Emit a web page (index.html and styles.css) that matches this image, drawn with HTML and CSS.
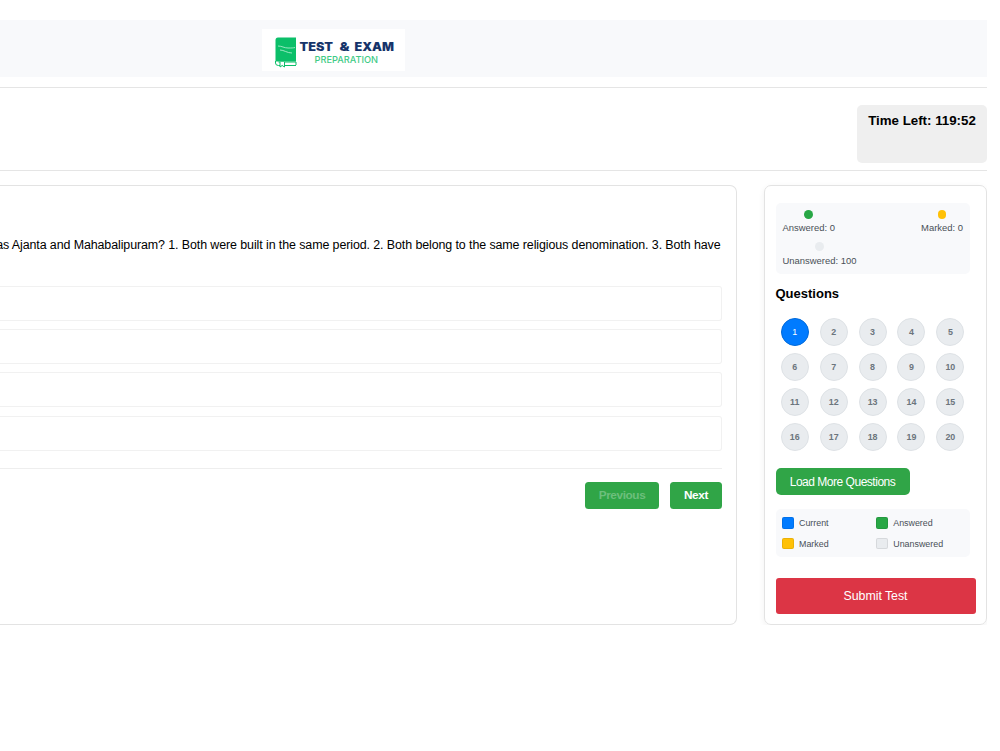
FILE: index.html
```html
<!DOCTYPE html>
<html lang="en">
  <head>
    <meta charset="UTF-8" />
    <meta name="viewport" content="width=device-width, initial-scale=1.0" />
    <title>Test & Exam Preparation</title>
    <link rel="stylesheet" href="styles.css">
  </head>
  <body>
    <header class="header">
      <svg class="logo" width="143" height="42" viewBox="0 0 143 42">
        <rect width="143" height="42" fill="#fff" />
        <path d="M16 8.500h18v24H13.500V11q0-2.500 2.500-2.500z" fill="#0bbf69" />
        <path d="M13.500 32v2q0 2.500 3 2.500h17.500M16.500 33h17.500v3" fill="none" stroke="#0bbf69" stroke-width="1" />
        <path d="M18 33v5l2.200-1.500 2.300 1.500v-5" fill="#fff" stroke="#0bbf69" stroke-width="1" />
        <path d="M16 17c4 0 6 2 10 2s5 0 7-.5M18 21c4 0 7 3 12 3" fill="none" stroke="#a5ebc8" stroke-width=".9" />
        <text class="logo-name" x="37.500" y="21.500" textLength="33.500" lengthAdjust="spacingAndGlyphs">TEST</text>
        <text class="logo-name" x="77.500" y="21.500" textLength="10" lengthAdjust="spacingAndGlyphs">&amp;</text>
        <text class="logo-name" x="92.500" y="21.500" textLength="39.500" lengthAdjust="spacingAndGlyphs">EXAM</text>
        <text class="logo-sub" x="52.500" y="33.800" textLength="63.500" lengthAdjust="spacingAndGlyphs">PREPARATION</text>
      </svg>
    </header>
    <div class="timer-bar">
      <div class="timer">Time Left: 119:52</div>
    </div>
    <div class="container">
      <main class="question-panel">
        <div class="question">as Ajanta and Mahabalipuram? 1. Both were built in the same period. 2. Both belong to the same religious denomination. 3. Both have</div>
        <div class="options">
          <div class="option"></div>
          <div class="option"></div>
          <div class="option"></div>
          <div class="option"></div>
        </div>
        <div class="navigation">
          <button disabled>Previous</button>
          <button>Next</button>
        </div>
      </main>
      <aside class="sidebar">
        <div class="stats">
          <div class="stat"><span class="dot answered"></span>Answered: 0</div>
          <div class="stat"><span class="dot marked"></span>Marked: 0</div>
          <div class="stat"><span class="dot unanswered"></span>Unanswered: 100</div>
        </div>
        <h3>Questions</h3>
        <div class="question-grid">
          <span class="number current">1</span>
          <span class="number">2</span>
          <span class="number">3</span>
          <span class="number">4</span>
          <span class="number">5</span>
          <span class="number">6</span>
          <span class="number">7</span>
          <span class="number">8</span>
          <span class="number">9</span>
          <span class="number">10</span>
          <span class="number">11</span>
          <span class="number">12</span>
          <span class="number">13</span>
          <span class="number">14</span>
          <span class="number">15</span>
          <span class="number">16</span>
          <span class="number">17</span>
          <span class="number">18</span>
          <span class="number">19</span>
          <span class="number">20</span>
        </div>
        <button class="load-more">Load More Questions</button>
        <div class="legend">
          <div class="legend-item"><span class="box current"></span>Current</div>
          <div class="legend-item"><span class="box answered"></span>Answered</div>
          <div class="legend-item"><span class="box marked"></span>Marked</div>
          <div class="legend-item"><span class="box unanswered"></span>Unanswered</div>
        </div>
        <button class="submit">Submit Test</button>
      </aside>
    </div>
  </body>
</html>
```
FILE: styles.css
```css
* {
  margin: 0;
  padding: 0;
  box-sizing: border-box;
}
body {
  width: 987px;
  padding-top: 20.4px;
  background: #fff;
  font-family: "Liberation Sans", Arial, sans-serif;
  color: #000;
}
button {
  font-family: inherit;
  border: none;
  color: white;
  background-color: #30a547;
}
.header {
  height: 57px;
  padding: 8.5px 0 0 262px;
  background-color: #f8f9fb;
}
.logo {
  display: block;
}
.logo-name {
  font: 900 11.5px Inter, sans-serif;
  fill: #16346a;
}
.logo-sub {
  font: 500 9.2px Inter, sans-serif;
  fill: #3fcb87;
}
.timer-bar {
  display: flex;
  justify-content: flex-end;
  height: 84px;
  margin-top: 9.5px;
  padding-top: 17px;
  border-top: 1px solid #e5e5e5;
  border-bottom: 1px solid #e5e5e5;
}
.timer {
  width: 130px;
  height: 58px;
  padding-top: 8px;
  border-radius: 5px;
  background-color: #efefef;
  font-size: 13.3px;
  font-weight: bold;
  line-height: 16px;
  text-align: center;
  white-space: nowrap;
}
.container {
  display: flex;
  justify-content: space-between;
  height: 440px;
  margin-top: 14px;
}
.question-panel {
  width: 737px;
  padding: 52px 14px 0 0;
  border: 1px solid #e3e3e3;
  border-left: none;
  border-radius: 0 7px 7px 0;
}
.question {
  display: flex;
  justify-content: flex-end;
  padding-right: 1.5px;
  font-size: 12.44px;
  letter-spacing: -0.097px;
  line-height: 15px;
  white-space: nowrap;
}
.options {
  display: flex;
  flex-direction: column;
  gap: 8.2px;
  margin-top: 33.2px;
}
.option {
  height: 35px;
  border: 1px solid #f1f1f1;
  border-left: none;
  border-radius: 0 3px 3px 0;
}
.navigation {
  display: flex;
  justify-content: flex-end;
  gap: 11px;
  margin-top: 17px;
  padding-top: 13.5px;
  border-top: 1px solid #eee;
}
.navigation button {
  width: 52px;
  height: 26.5px;
  border-radius: 3.5px;
  font-size: 11.8px;
  font-weight: bold;
  letter-spacing: -0.4px;
}
.navigation button:disabled {
  width: 74px;
  color: #6cbf7c;
}
.sidebar {
  width: 223px;
  padding: 17px 10.5px 0;
  border: 1px solid #e3e3e3;
  border-radius: 7px;
  box-shadow: 0 2px 6px rgba(0, 0, 0, 0.06);
}
.stats {
  display: flex;
  flex-wrap: wrap;
  justify-content: space-between;
  row-gap: 6px;
  width: 194.5px;
  height: 71.5px;
  padding: 7px;
  border-radius: 5px;
  background-color: #f8f9fb;
}
.stat {
  display: flex;
  flex-direction: column;
  align-items: center;
  gap: 3.3px;
  height: 26.5px;
  font-size: 9.45px;
  line-height: 11px;
  color: #495057;
}
.stat:last-child {
  margin-right: 60px;
}
.dot {
  flex: none;
  width: 8.9px;
  height: 8.9px;
  border-radius: 50%;
}
.current {
  background-color: #007bff;
}
.answered {
  background-color: #28a745;
}
.marked {
  background-color: #ffc107;
}
.unanswered {
  background-color: #e9ecef;
}
.sidebar h3 {
  margin-top: 12px;
  font-size: 13px;
  line-height: 16px;
}
.question-grid {
  display: grid;
  grid-template-columns: repeat(5, 28px);
  column-gap: 10.9px;
  row-gap: 6.9px;
  margin: 15.8px 0 0 5.3px;
}
.number {
  height: 28px;
  border: 1px solid #dee2e6;
  border-radius: 50%;
  background-color: #e9ecef;
  color: #6c757d;
  font-size: 8.9px;
  font-weight: bold;
  line-height: 26px;
  text-align: center;
}
.number.current {
  border-color: #0069d9;
  background-color: #007bff;
  color: white;
  font-weight: normal;
}
.load-more {
  display: block;
  width: 134px;
  height: 27px;
  margin-top: 17.2px;
  border-radius: 5px;
  font-size: 12px;
  letter-spacing: -0.48px;
}
.legend {
  display: grid;
  grid-template-columns: 1fr 1fr;
  column-gap: 7px;
  row-gap: 9px;
  width: 194.5px;
  height: 48px;
  margin-top: 14px;
  padding: 8px 6.5px;
  border-radius: 5px;
  background-color: #f8f9fb;
}
.legend-item {
  display: flex;
  align-items: center;
  gap: 5.3px;
  height: 11.7px;
  font-size: 8.9px;
  color: #495057;
}
.box {
  width: 11.7px;
  height: 11.7px;
  border: 1px solid rgba(0, 0, 0, 0.08);
  border-radius: 2px;
}
.submit {
  display: block;
  width: 100%;
  height: 35.5px;
  margin-top: 21px;
  border-radius: 3px;
  background-color: #dc3545;
  font-size: 12.4px;
  letter-spacing: -0.05px;
}
```
